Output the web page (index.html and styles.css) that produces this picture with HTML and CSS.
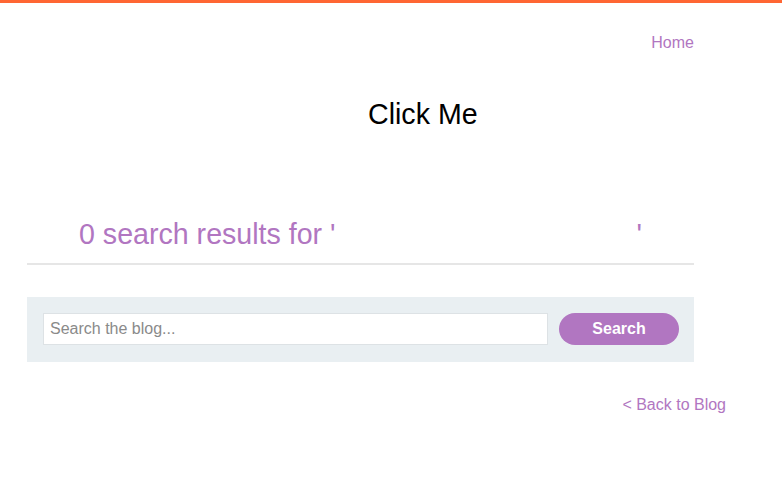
FILE: index.html
```html
<!DOCTYPE html>
<html>
<head>
<meta charset="utf-8">
<link rel="stylesheet" href="styles.css">
</head>
<body>
<div class="topbar"></div>
<div class="page">
  <nav class="nav"><a class="link" href="#">Home</a></nav>
  <div class="click">Click Me</div>
  <h1 class="results">0 search results for '<span class="query"></span>'</h1>
  <div class="rule"></div>
  <form class="searchbox">
    <input class="input" type="text" placeholder="Search the blog...">
    <button class="btn" type="button">Search</button>
  </form>
  <div class="back"><a class="link" href="#">&lt; Back to Blog</a></div>
</div>
</body>
</html>
```
FILE: styles.css
```css
html, body { margin: 0; padding: 0; background: #fff; }
body { font-family: "Liberation Sans", Arial, sans-serif; }
.topbar { height: 3px; background: #ff6633; }
.page { width: 667px; margin-left: 27px; }
.link { color: #b176c1; text-decoration: none; font-size: 16px; }
.nav { text-align: right; padding-top: 31px; line-height: 18px; }
.click { font-size: 28.6px; line-height: 32px; color: #000; padding-top: 46px; padding-left: 341px; }
.results { font-weight: normal; font-size: 28.6px; line-height: 32px; color: #b176c1; margin: 0; padding-top: 88px; padding-left: 52px; }
.query { display: inline-block; width: 301px; }
.rule { height: 2px; background: #e6e6e6; margin-top: 13px; }
.searchbox { display: flex; align-items: center; gap: 11px; background: #e9eff2; margin-top: 32px; padding: 16px 15px 17px 16px; }
.input { flex: 0 0 505px; box-sizing: border-box; height: 32px; border: 1px solid #dde2e5; background: #fff; padding: 0 6px; font-family: "Liberation Sans", Arial, sans-serif; font-size: 16px; color: #333; outline: none; }
.input::placeholder { color: #8a8a8a; }
.btn { width: 120px; height: 32px; border: none; border-radius: 16px; background: #b176c1; color: #fff; font-family: "Liberation Sans", Arial, sans-serif; font-weight: bold; font-size: 16px; padding: 0; }
.back { text-align: right; margin-right: -32px; margin-top: 34px; line-height: 18px; }
```
